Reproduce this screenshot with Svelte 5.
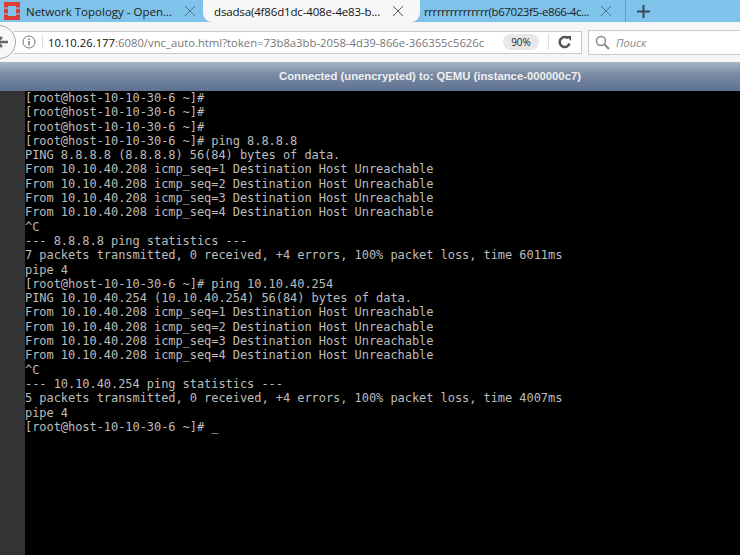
<script>
	// terminal output of the vnc console
	const lines = [
		"[root@host-10-10-30-6 ~]#",
		"[root@host-10-10-30-6 ~]#",
		"[root@host-10-10-30-6 ~]#",
		"[root@host-10-10-30-6 ~]# ping 8.8.8.8",
		"PING 8.8.8.8 (8.8.8.8) 56(84) bytes of data.",
		"From 10.10.40.208 icmp_seq=1 Destination Host Unreachable",
		"From 10.10.40.208 icmp_seq=2 Destination Host Unreachable",
		"From 10.10.40.208 icmp_seq=3 Destination Host Unreachable",
		"From 10.10.40.208 icmp_seq=4 Destination Host Unreachable",
		"^C",
		"--- 8.8.8.8 ping statistics ---",
		"7 packets transmitted, 0 received, +4 errors, 100% packet loss, time 6011ms",
		"pipe 4",
		"[root@host-10-10-30-6 ~]# ping 10.10.40.254",
		"PING 10.10.40.254 (10.10.40.254) 56(84) bytes of data.",
		"From 10.10.40.208 icmp_seq=1 Destination Host Unreachable",
		"From 10.10.40.208 icmp_seq=2 Destination Host Unreachable",
		"From 10.10.40.208 icmp_seq=3 Destination Host Unreachable",
		"From 10.10.40.208 icmp_seq=4 Destination Host Unreachable",
		"^C",
		"--- 10.10.40.254 ping statistics ---",
		"5 packets transmitted, 0 received, +4 errors, 100% packet loss, time 4007ms",
		"pipe 4"
	];
</script>

<main>
	<div class="tabs">
		<div class="tab first">
			<svg class="logo" width="20" height="20" viewBox="0 0 20 20">
				<path d="M3 1h16v18H3z M7 5v10h8V5z" fill="#dc3c3a" fill-rule="evenodd"/>
				<path d="M3 6.500h4v1.200H3zM15 6.500h4v1.200h-4zM3 12.300h4v1.200H3zM15 12.300h4v1.200h-4z" fill="#7fc2ea"/>
			</svg>
			<span class="title">Network Topology - Open...</span>
			<svg class="close" width="12" height="12" viewBox="0 0 12 12"><path d="M1 1l10 10M11 1L1 11" stroke="#4d6f86" stroke-width="1"/></svg>
		</div>
		<div class="tab active">
			<span class="title narrow">dsadsa(4f86d1dc-408e-4e83-b...</span>
			<svg class="close" width="12" height="12" viewBox="0 0 12 12"><path d="M1 1l10 10M11 1L1 11" stroke="#555" stroke-width="1"/></svg>
		</div>
		<div class="tab third">
			<span class="title narrower">rrrrrrrrrrrrrrr(b67023f5-e866-4c...</span>
			<svg class="close" width="12" height="12" viewBox="0 0 12 12"><path d="M1 1l10 10M11 1L1 11" stroke="#4d6f86" stroke-width="1"/></svg>
		</div>
		<div class="plus">
			<svg width="13" height="13" viewBox="0 0 13 13"><path d="M6.500 0v13M0 6.500h13" stroke="#3a4a55" stroke-width="2"/></svg>
		</div>
	</div>

	<div class="toolbar">
		<div class="back">
			<svg width="12" height="12" viewBox="0 0 12 12"><path d="M6 1L1 6l5 5M1 6h11" stroke="#666" stroke-width="2.500" fill="none"/></svg>
		</div>
		<div class="urlbar">
			<svg class="info" width="14" height="14" viewBox="0 0 14 14"><circle cx="7" cy="7" r="6" fill="none" stroke="#777"/><path d="M7 6v4.500M7 3.500v1.500" stroke="#777" stroke-width="1.500"/></svg>
			<span class="url"><span class="host">10.10.26.177</span>:6080/vnc_auto.html?token=73b8a3bb-2058-4d39-866e-366355c5626c</span>
			<span class="zoom">90%</span>
			<span class="sep"></span>
			<svg class="reload" width="14" height="14" viewBox="0 0 14 14"><path d="M11.500 8.500A5 5 0 1 1 10 3.200" fill="none" stroke="#555" stroke-width="2.500"/><path d="M8 1h5v5z" fill="#555"/></svg>
		</div>
		<div class="search">
			<svg width="15" height="15" viewBox="0 0 15 15"><circle cx="6" cy="6" r="4.500" fill="none" stroke="#888" stroke-width="1.500"/><path d="M9.500 9.500L14 14" stroke="#888" stroke-width="2"/></svg>
			<span>Поиск</span>
		</div>
	</div>

	<div class="status">Connected (unencrypted) to: QEMU (instance-000000c7)</div>

	<div class="console">
		<pre class="screen">{#each lines as line}<div class="line">{line}</div>{/each}<div class="line">[root@host-10-10-30-6 ~]# <span class="cursor">_</span></div></pre>
	</div>
</main>

<style>
	:global(body) {
		background-color: #333;
	}
	main {
		width: 740px;
		height: 555px;
		overflow: hidden;
		display: flex;
		flex-direction: column;
		font-family: "Open Sans", "Liberation Sans", sans-serif;
	}
	.tabs {
		height: 22px;
		display: flex;
		background: #7fc2ea;
		flex-shrink: 0;
	}
	.tab {
		display: flex;
		align-items: center;
		font-size: 11.500px;
		color: #222;
		white-space: nowrap;
		box-sizing: border-box;
	}
	.first {
		width: 203px;
		padding-left: 1px;
		gap: 5px;
	}
	.first .close {
		margin-left: 7px;
	}
	.active {
		width: 217px;
		background: #f7f7f7;
		padding-left: 11px;
		border-radius: 0 0 9px 9px;
		color: #111;
		gap: 12px;
	}
	.third {
		width: 205px;
		padding-left: 4px;
		gap: 11px;
	}
	.narrow {
		letter-spacing: -0.150px;
	}
	.narrower {
		letter-spacing: -0.400px;
	}
	.plus {
		border-left: 1px solid #6a9cbb;
		padding-left: 11px;
		display: flex;
		align-items: center;
	}
	.toolbar {
		height: 40px;
		box-sizing: border-box;
		background: #f6f6f6;
		display: flex;
		align-items: center;
		flex-shrink: 0;
	}
	.back {
		width: 34px;
		height: 34px;
		margin-left: -18px;
		border: 1px solid #aaa;
		border-radius: 50%;
		background: #f8f8f8;
		display: flex;
		align-items: center;
		justify-content: center;
		z-index: 1;
		flex-shrink: 0;
		padding-left: 6px;
		box-sizing: border-box;
	}
	.urlbar {
		width: 568px;
		height: 23px;
		box-sizing: border-box;
		margin-left: -2px;
		background: #fff;
		border: 1px solid #c9c9c9;
		border-left: none;
		display: flex;
		align-items: center;
		padding-left: 8px;
		flex-shrink: 0;
	}
	.info {
		padding-right: 6px;
		border-right: 1px solid #ddd;
		margin-right: 5px;
		flex-shrink: 0;
	}
	.url {
		font-size: 11.300px;
		color: #777;
		white-space: nowrap;
		width: 431px;
		flex-shrink: 0;
	}
	.host {
		color: #111;
	}
	.zoom {
		margin-left: 24px;
		width: 36px;
		height: 16px;
		line-height: 16px;
		font-size: 10px;
		text-align: center;
		border-radius: 8px;
		background: #e8e8e8;
		color: #222;
		flex-shrink: 0;
	}
	.sep {
		width: 1px;
		height: 16px;
		background: #ddd;
		margin: 0 9px;
		flex-shrink: 0;
	}
	.reload {
		flex-shrink: 0;
	}
	.search {
		margin-left: 6px;
		flex: 1;
		height: 23px;
		background: #fff;
		border: 1px solid #c9c9c9;
		border-right: none;
		display: flex;
		align-items: center;
		gap: 6px;
		padding-left: 6px;
		font-size: 11px;
		font-style: italic;
		color: #888;
	}
	.status {
		height: 29px;
		flex-shrink: 0;
		background: linear-gradient(#a8b5c6, #7b8ca6 40%, #5d7190);
		color: #f0f0f0;
		font: bold 11.300px/29px "Liberation Sans", sans-serif;
		text-align: center;
		padding-left: 120px;
		box-sizing: border-box;
	}
	.console {
		flex: 1;
		padding-left: 25px;
	}
	.screen {
		background: #000;
		height: 100%;
		margin: 0;
		font: 12px/14.300px "DejaVu Sans Mono", monospace;
		letter-spacing: -0.060px;
		color: #bcbcbc;
	}
	.line {
		height: 14.300px;
	}
	.cursor {
		color: #ccc;
	}
</style>
